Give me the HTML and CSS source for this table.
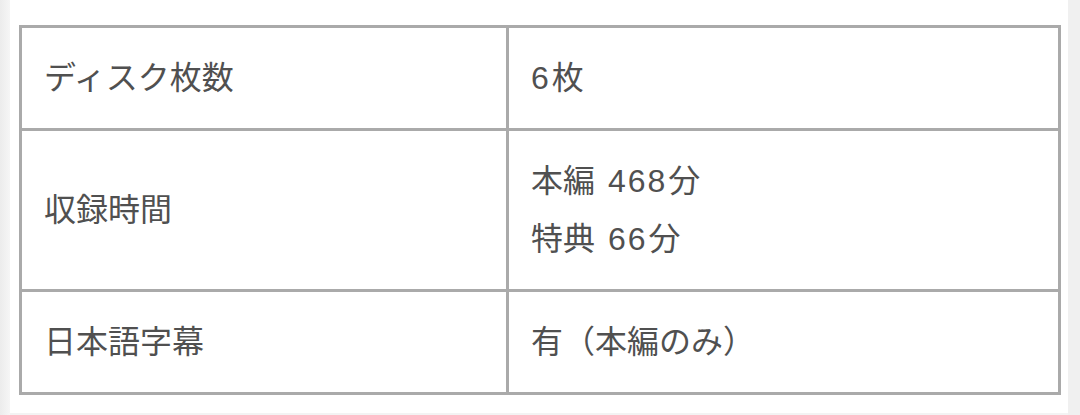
FILE: index.html
```html
<!DOCTYPE html>
<html lang="ja">
<head>
<meta charset="utf-8">
<title>仕様</title>
<link rel="stylesheet" href="styles.css">
</head>
<body>
<div class="page">
  <table class="spec">
    <tbody>
      <tr>
        <th>ディスク枚数</th>
        <td><span class="num">6</span>枚</td>
      </tr>
      <tr>
        <th>収録時間</th>
        <td>本編 <span class="num">468</span>分<br>特典 <span class="num">66</span>分</td>
      </tr>
      <tr>
        <th>日本語字幕</th>
        <td>有（本編のみ）</td>
      </tr>
    </tbody>
  </table>
</div>
</body>
</html>
```

FILE: styles.css
```css
html, body {
  margin: 0;
  padding: 0;
}

body {
  width: 1080px;
  height: 415px;
  overflow: hidden;
  background: linear-gradient(to right, #ececec 0, #f6f6f6 10px, #f0f0f0 10px);
  font-family: "Liberation Sans", "Noto Sans CJK JP", sans-serif;
}

.page {
  margin-left: 10px;
  width: 1058px;
  height: 415px;
  box-sizing: border-box;
  background: #fff;
  padding: 25px 0 0 9px;
  border-bottom: 2px solid #f3f3f3;
}

.spec {
  border-collapse: collapse;
  width: 1042px;
  table-layout: fixed;
}

.spec th,
.spec td {
  border: 3px solid #aaaaaa;
  padding: 21px 22px;
  font-size: 32px;
  line-height: 58px;
  font-weight: 400;
  color: #505050;
  text-align: left;
  vertical-align: middle;
  word-spacing: 4px;
}

.spec th {
  width: 440px;
}

.num {
  letter-spacing: 2px;
  margin-right: 1px;
}
```
